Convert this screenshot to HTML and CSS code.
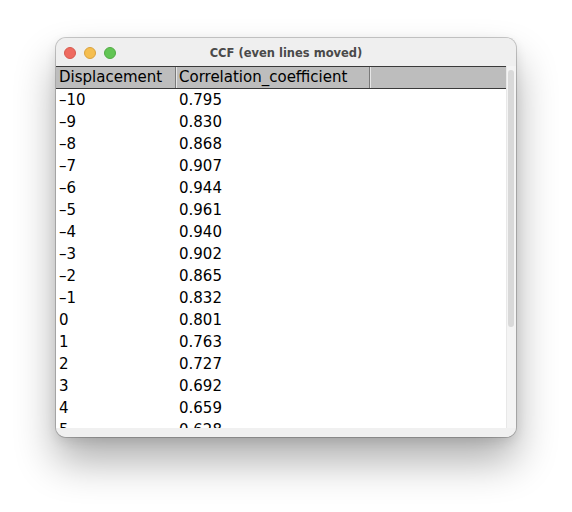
FILE: index.html
```html
<!DOCTYPE html>
<html>
<head>
<meta charset="utf-8">
<link rel="stylesheet" href="styles.css">
</head>
<body>
<div class="window">
  <div class="titlebar">
    <div class="lights">
      <span class="light red"></span>
      <span class="light yellow"></span>
      <span class="light green"></span>
    </div>
    <div class="title">CCF (even lines moved)</div>
    <div></div>
  </div>
  <div class="content">
    <div class="table">
      <div class="thead">
        <div class="th c1">Displacement</div>
        <div class="th c2">Correlation_coefficient</div>
        <div class="th fill"></div>
      </div>
      <div class="rows">
        <div class="row"><span class="c1">–10</span><span class="c2">0.795</span></div>
        <div class="row"><span class="c1">–9</span><span class="c2">0.830</span></div>
        <div class="row"><span class="c1">–8</span><span class="c2">0.868</span></div>
        <div class="row"><span class="c1">–7</span><span class="c2">0.907</span></div>
        <div class="row"><span class="c1">–6</span><span class="c2">0.944</span></div>
        <div class="row"><span class="c1">–5</span><span class="c2">0.961</span></div>
        <div class="row"><span class="c1">–4</span><span class="c2">0.940</span></div>
        <div class="row"><span class="c1">–3</span><span class="c2">0.902</span></div>
        <div class="row"><span class="c1">–2</span><span class="c2">0.865</span></div>
        <div class="row"><span class="c1">–1</span><span class="c2">0.832</span></div>
        <div class="row"><span class="c1">0</span><span class="c2">0.801</span></div>
        <div class="row"><span class="c1">1</span><span class="c2">0.763</span></div>
        <div class="row"><span class="c1">2</span><span class="c2">0.727</span></div>
        <div class="row"><span class="c1">3</span><span class="c2">0.692</span></div>
        <div class="row"><span class="c1">4</span><span class="c2">0.659</span></div>
        <div class="row"><span class="c1">5</span><span class="c2">0.628</span></div>
      </div>
    </div>
    <div class="vscroll"><div class="thumb"></div></div>
  </div>
  <div class="bottom"></div>
</div>
</body>
</html>
```

FILE: styles.css
```css
html {
  margin: 0;
  height: 100%;
  background: #ffffff;
}
body {
  margin: 0;
  min-height: 100%;
  box-sizing: border-box;
  padding: 38px 0 0 56px;
  font-family: "DejaVu Sans", sans-serif;
}
.window {
  width: 460px;
  height: 399px;
  border-radius: 10px;
  overflow: hidden;
  background: #efefef;
  box-shadow: 0 0 0 1px rgba(0,0,0,0.2), 0 24px 42px rgba(0,0,0,0.32), 0 4px 12px rgba(0,0,0,0.1);
  display: flex;
  flex-direction: column;
}
.titlebar {
  height: 28px;
  flex: none;
  display: grid;
  grid-template-columns: 1fr auto 1fr;
  align-items: center;
  background: #efefef;
}
.lights {
  display: flex;
  gap: 8px;
  padding-left: 8px;
  padding-top: 1px;
}
.light {
  width: 12px;
  height: 12px;
  border-radius: 50%;
  box-sizing: border-box;
}
.red { background: #ee6a5f; border: 0.5px solid #d65a4f; }
.yellow { background: #f5be4f; border: 0.5px solid #d9a23f; }
.green { background: #62c554; border: 0.5px solid #52ab45; }
.title {
  font-size: 11.5px;
  font-weight: bold;
  color: #4a4a4a;
  padding-top: 1px;
}
.content {
  height: 362px;
  flex: none;
  display: flex;
}
.table {
  width: 450px;
  background: #ffffff;
  overflow: hidden;
}
.thead {
  display: flex;
  height: 21px;
  border-top: 1px solid #3a3a3a;
  border-bottom: 1px solid #3a3a3a;
  background: #bdbdbd;
}
.th {
  font-size: 15px;
  line-height: 21px;
  color: #000;
  box-sizing: border-box;
  white-space: nowrap;
}
.th.c1 {
  width: 120px;
  padding-left: 3px;
  border-right: 1px solid #7a7a7a;
}
.th.c2 {
  width: 194px;
  padding-left: 2px;
  border-left: 1px solid #e6e6e6;
  border-right: 1px solid #7a7a7a;
}
.th.fill {
  flex: 1;
  border-left: 1px solid #e6e6e6;
}
.rows {
  height: 339px;
  overflow: hidden;
}
.row {
  display: flex;
  height: 22px;
  line-height: 22px;
  font-size: 15px;
  color: #000;
}
.row .c1 {
  width: 121px;
  padding-left: 3px;
  box-sizing: border-box;
}
.row .c2 {
  padding-left: 2px;
}
.vscroll {
  width: 10px;
  background: #f4f4f4;
  border-left: 1px solid #e8e8e8;
  box-sizing: border-box;
  padding: 4px 1px 0 1px;
}
.thumb {
  height: 257px;
  width: 6px;
  border-radius: 3px;
  background: #d9d9d9;
}
.bottom {
  flex: 1;
  background: #f0f0f0;
}
```
